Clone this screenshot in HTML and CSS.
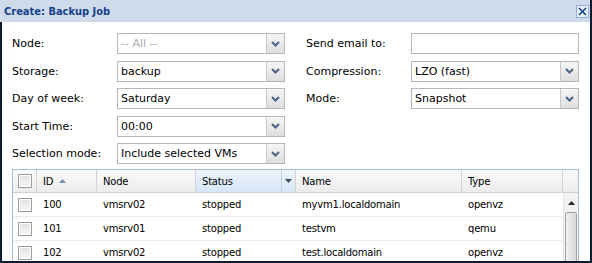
FILE: index.html
```html
<!DOCTYPE html>
<html lang="en">
<head>
    <meta charset="UTF-8">
    <title>Create: Backup Job</title>
    <link rel="stylesheet" href="styles.css">
</head>
<body>
    <div class="window">
        <div class="window-header">
            <span class="window-title">Create: Backup Job</span>
            <span class="tool-close">
                <svg width="11" height="11" viewBox="0 0 11 11"><path d="M2 2 L9 9 M9 2 L2 9" stroke="#15428b" stroke-width="1.6" fill="none"/></svg>
            </span>
        </div>
        <div class="window-body">
            <div class="form-columns">
                <div class="form-col">
                    <div class="form-row">
                        <label>Node:</label>
                        <div class="combo disabled"><span class="combo-value">-- All --</span><span class="trigger"><svg width="9" height="6" viewBox="0 0 9 6"><path d="M1 1 L4.5 4.5 L8 1" stroke="#4a6285" stroke-width="2" fill="none"/></svg></span></div>
                    </div>
                    <div class="form-row">
                        <label>Storage:</label>
                        <div class="combo"><span class="combo-value">backup</span><span class="trigger"><svg width="9" height="6" viewBox="0 0 9 6"><path d="M1 1 L4.5 4.5 L8 1" stroke="#4a6285" stroke-width="2" fill="none"/></svg></span></div>
                    </div>
                    <div class="form-row">
                        <label>Day of week:</label>
                        <div class="combo"><span class="combo-value">Saturday</span><span class="trigger"><svg width="9" height="6" viewBox="0 0 9 6"><path d="M1 1 L4.5 4.5 L8 1" stroke="#4a6285" stroke-width="2" fill="none"/></svg></span></div>
                    </div>
                    <div class="form-row">
                        <label>Start Time:</label>
                        <div class="combo"><span class="combo-value">00:00</span><span class="trigger"><svg width="9" height="6" viewBox="0 0 9 6"><path d="M1 1 L4.5 4.5 L8 1" stroke="#4a6285" stroke-width="2" fill="none"/></svg></span></div>
                    </div>
                    <div class="form-row">
                        <label>Selection mode:</label>
                        <div class="combo"><span class="combo-value">Include selected VMs</span><span class="trigger"><svg width="9" height="6" viewBox="0 0 9 6"><path d="M1 1 L4.5 4.5 L8 1" stroke="#4a6285" stroke-width="2" fill="none"/></svg></span></div>
                    </div>
                </div>
                <div class="form-col">
                    <div class="form-row">
                        <label>Send email to:</label>
                        <div class="combo"><span class="combo-value"></span></div>
                    </div>
                    <div class="form-row">
                        <label>Compression:</label>
                        <div class="combo"><span class="combo-value">LZO (fast)</span><span class="trigger"><svg width="9" height="6" viewBox="0 0 9 6"><path d="M1 1 L4.5 4.5 L8 1" stroke="#4a6285" stroke-width="2" fill="none"/></svg></span></div>
                    </div>
                    <div class="form-row">
                        <label>Mode:</label>
                        <div class="combo"><span class="combo-value">Snapshot</span><span class="trigger"><svg width="9" height="6" viewBox="0 0 9 6"><path d="M1 1 L4.5 4.5 L8 1" stroke="#4a6285" stroke-width="2" fill="none"/></svg></span></div>
                    </div>
                </div>
            </div>

            <div class="grid">
                <div class="grid-header">
                    <div class="cell col-check"><span class="checkbox"></span></div>
                    <div class="cell col-id">ID <svg class="sort-icon" width="7" height="4" viewBox="0 0 7 4"><path d="M0 4 L3.5 0 L7 4 Z" fill="#6f8fb8"/></svg></div>
                    <div class="cell col-node">Node</div>
                    <div class="cell col-status hover"><span class="head-text">Status</span><span class="head-menu"><svg width="7" height="4" viewBox="0 0 7 4"><path d="M0 0 L7 0 L3.5 4 Z" fill="#3b4b60"/></svg></span></div>
                    <div class="cell col-name">Name</div>
                    <div class="cell col-type">Type</div>
                    <div class="cell col-fill"></div>
                </div>
                <div class="grid-body">
                    <div class="grid-rows">
                        <div class="grid-row">
                            <div class="cell col-check"><span class="checkbox"></span></div>
                            <div class="cell col-id">100</div>
                            <div class="cell col-node">vmsrv02</div>
                            <div class="cell col-status">stopped</div>
                            <div class="cell col-name">myvm1.localdomain</div>
                            <div class="cell col-type">openvz</div>
                        </div>
                        <div class="grid-row">
                            <div class="cell col-check"><span class="checkbox"></span></div>
                            <div class="cell col-id">101</div>
                            <div class="cell col-node">vmsrv01</div>
                            <div class="cell col-status">stopped</div>
                            <div class="cell col-name">testvm</div>
                            <div class="cell col-type">qemu</div>
                        </div>
                        <div class="grid-row">
                            <div class="cell col-check"><span class="checkbox"></span></div>
                            <div class="cell col-id">102</div>
                            <div class="cell col-node">vmsrv02</div>
                            <div class="cell col-status">stopped</div>
                            <div class="cell col-name">test.localdomain</div>
                            <div class="cell col-type">openvz</div>
                        </div>
                    </div>
                    <div class="scrollbar">
                        <div class="scroll-up"><svg width="7" height="4" viewBox="0 0 7 4"><path d="M0 4 L3.5 0 L7 4 Z" fill="#222"/></svg></div>
                        <div class="scroll-thumb"></div>
                    </div>
                </div>
            </div>
        </div>
    </div>
</body>
</html>
```

FILE: styles.css
```css
html, body {
    margin: 0;
    padding: 0;
    overflow: hidden;
}
body {
    font-family: "DejaVu Sans", Verdana, sans-serif;
    font-size: 11px;
    color: #000;
    background: #fff;
}
.window {
    width: 592px;
    height: 263px;
    box-sizing: border-box;
    border-right: 2px solid #0f1b30;
    border-bottom: 2px solid #0f1b30;
    display: flex;
    flex-direction: column;
    overflow: hidden;
}
.window-header {
    height: 22px;
    flex: none;
    display: flex;
    align-items: center;
    justify-content: space-between;
    padding: 0 1px 0 4px;
    background: #cfdbea;
}
.window-title {
    font-family: "DejaVu Sans Condensed", "DejaVu Sans", sans-serif;
    font-stretch: condensed;
    font-weight: bold;
    font-size: 11px;
    color: #15428b;
}
.tool-close {
    width: 13px;
    height: 13px;
    box-sizing: border-box;
    border: 1px solid #8fb0dc;
    background: #e9f0f9;
    display: flex;
    align-items: center;
    justify-content: center;
}
.window-body {
    flex: 1;
    border-left: 2px solid #0f1b30;
    padding: 11px 0 0 10px;
    overflow: hidden;
}
.form-columns {
    display: grid;
    grid-template-columns: 273px 273px;
    column-gap: 21px;
}
.form-row {
    display: flex;
    align-items: center;
    height: 21px;
    margin-bottom: 6.5px;
}
.form-col .form-row:last-child {
    margin-bottom: 5px;
}
.form-row label {
    width: 105px;
    flex: none;
}
.combo {
    width: 168px;
    height: 21px;
    box-sizing: border-box;
    border: 1px solid #b3b6bd;
    display: flex;
    background: #fff;
}
.combo-value {
    flex: 1;
    padding-left: 3px;
    line-height: 19px;
    white-space: nowrap;
    overflow: hidden;
}
.combo.disabled .combo-value {
    color: #aeaeae;
}
.trigger {
    width: 17px;
    flex: none;
    border-left: 1px solid #c9c9c9;
    background: linear-gradient(#f6f6f6, #dedede);
    display: flex;
    align-items: center;
    justify-content: center;
}
.grid {
    width: 567px;
    box-sizing: border-box;
    border: 1px solid #a9bbd0;
    border-bottom: none;
    font-size: 10px;
    letter-spacing: -0.2px;
}
.grid-header {
    display: flex;
    height: 22px;
    border-bottom: 1px solid #d0d0d0;
    background: linear-gradient(#fbfbfb, #ececec);
}
.grid-header .cell {
    border-right: 1px solid #d3d3d3;
}
.cell {
    box-sizing: border-box;
    flex: none;
    display: flex;
    align-items: center;
    padding-left: 6px;
    white-space: nowrap;
}
.col-check { width: 24px; padding-left: 0; justify-content: center; }
.col-id { width: 60px; }
.col-node { width: 99px; }
.col-status { width: 100px; }
.col-name { width: 166px; }
.col-type { width: 101px; }
.col-fill { width: 15px; border-right: none !important; }
.sort-icon {
    margin-left: 6px;
}
.col-status.hover {
    padding-right: 0;
    background: linear-gradient(#edf4fc, #d6e5f7);
    justify-content: space-between;
}
.head-menu {
    width: 13px;
    height: 100%;
    border-left: 1px solid #c2d3e8;
    display: flex;
    align-items: center;
    justify-content: center;
}
.checkbox {
    width: 14px;
    height: 14px;
    box-sizing: border-box;
    border: 1px solid #9a9a9a;
    box-shadow: inset 0 0 0 1px #fff;
    background: linear-gradient(#e2e2e2, #f7f7f7);
}
.grid-body {
    display: flex;
}
.grid-rows {
    width: 550px;
}
.grid-row {
    display: flex;
    height: 24px;
    box-sizing: border-box;
    border-bottom: 1px solid #ededed;
}
.scrollbar {
    width: 15px;
    background: #f3f3f3;
    border-left: 1px solid #e4e4e4;
    box-sizing: border-box;
}
.scroll-up {
    height: 19px;
    display: flex;
    align-items: center;
    justify-content: center;
}
.scroll-thumb {
    margin: 0 1px 0 1px;
    height: 60px;
    border: 1px solid #a2a2a2;
    border-radius: 2px;
    background: linear-gradient(to right, #f2f2f2, #d8d8d8);
}
```
